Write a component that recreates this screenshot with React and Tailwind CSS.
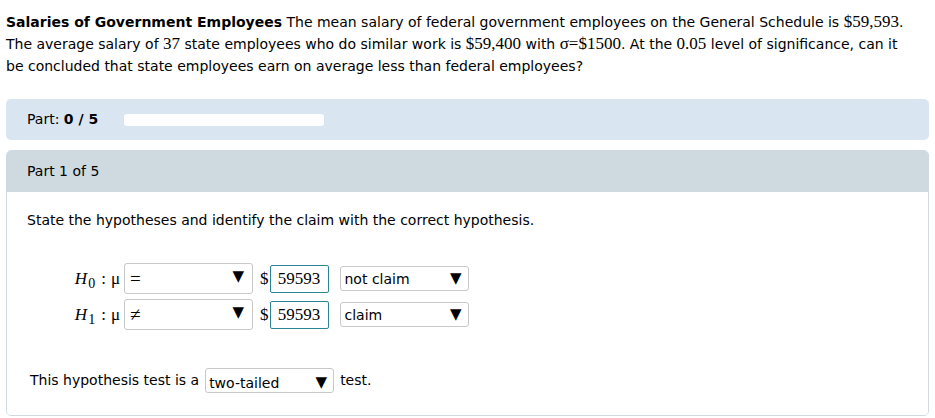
import React from 'react';

const serif = { fontFamily: '"Liberation Serif", "Times New Roman", serif' };

function Dropdown({ value, className = '', textClass = '' }) {
  return (
    <div className={`flex items-center justify-between border border-[#c8c8c8] rounded-[3px] bg-white ${className}`}>
      <span className={textClass}>{value}</span>
      <span className="text-[15px] leading-none mr-[6px] text-black">▼</span>
    </div>
  );
}

function HypRow({ sub, op, claim }) {
  return (
    <div className="flex items-center">
      <div className="w-[67px] flex items-center justify-end pr-[4px] text-[17px] leading-none text-black" style={serif}>
        <i>H</i>
        <span className="text-[14px] relative top-[5px] ml-[1px]">{sub}</span>
        <span className="ml-[6px]">:</span>
        <span className="ml-[5px]">μ</span>
      </div>
      <div className="flex items-center justify-between border border-[#c8c8c8] rounded-[3px] bg-white w-[129px] h-[31px]">
        <span className="pl-[5px] text-[19px] leading-none" style={serif}>{op}</span>
        <span className="text-[15px] leading-none mr-[8px] -mt-[5px]">▼</span>
      </div>
      <span className="ml-[7px] text-[17px] leading-none" style={serif}>$</span>
      <div className="ml-[1px] w-[59px] h-[28px] border border-[#2b8494] rounded-[2px] flex items-center justify-center text-[17px] leading-none" style={serif}>
        59593
      </div>
      <Dropdown value={claim} className="ml-[11px] w-[129px] h-[25px] pl-[4px]" textClass="text-[14px] leading-none" />
    </div>
  );
}

export default function App() {
  return (
    <div
      className="w-[935px] h-[418px] bg-white text-[#222] overflow-hidden"
      style={{ fontFamily: '"DejaVu Sans", Verdana, sans-serif' }}
    >
      <div className="px-[6px] pt-[11px] text-[14px] leading-[22px] text-black">
        <p>
          <b>Salaries of Government Employees</b> The mean salary of federal government employees on the General Schedule is{' '}
          <span className="text-[17px] leading-none" style={serif}>$59,593</span>.
          <br />
          The average salary of <span className="text-[17px] leading-none" style={serif}>37</span> state employees who do similar work is{' '}
          <span className="text-[17px] leading-none" style={serif}>$59,400</span> with{' '}
          <span className="text-[17px] leading-none" style={serif}>σ=$1500</span>. At the{' '}
          <span className="text-[17px] leading-none" style={serif}>0.05</span> level of significance, can it
          <br />
          be concluded that state employees earn on average less than federal employees?
        </p>
      </div>

      {/* progress */}
      <div className="mx-[6px] mt-[22px] h-[41px] rounded-[5px] bg-[#d9e6f1] flex items-center pl-[21px] text-[14px] text-black">
        <span>
          Part: <b>0 / 5</b>
        </span>
        <div className="ml-[26px] w-[200px] h-[12px] rounded-[3px] bg-white" />
      </div>

      {/* part panel */}
      <div className="mx-[6px] mt-[10px] h-[266px] rounded-[5px] border border-[#cfdae0] overflow-hidden flex flex-col">
        <div className="h-[41px] bg-[#cfdae0] flex items-center pl-[20px] text-[14px] text-black">Part 1 of 5</div>
        <div className="flex-1 bg-white text-[14px] text-black">
          <p className="pl-[20px] pt-[18px] leading-[20px]">State the hypotheses and identify the claim with the correct hypothesis.</p>
          <div className="pl-[50px] mt-[33px] flex flex-col gap-[5px]">
            <HypRow sub="0" op="=" claim="not claim" />
            <HypRow sub="1" op="≠" claim="claim" />
          </div>
          <div className="pl-[23px] mt-[38px] flex items-center">
            <span>This hypothesis test is a</span>
            <Dropdown value="two-tailed" className="ml-[6px] w-[129px] h-[25px] pl-[3px] items-end pb-[2px]" textClass="text-[14px] leading-none" />
            <span className="ml-[6px]">test.</span>
          </div>
        </div>
      </div>
    </div>
  );
}
